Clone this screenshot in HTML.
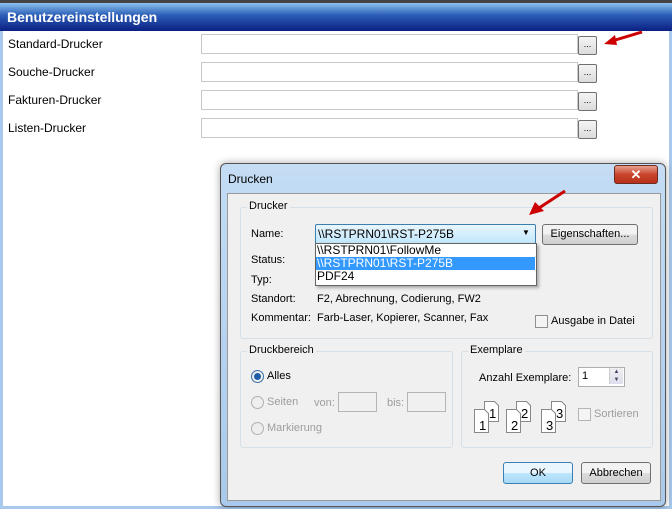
<!DOCTYPE html><html><head><style>
body{margin:0;width:672px;height:509px;position:relative;overflow:hidden;background:#fff;font-family:"Liberation Sans",sans-serif;font-size:12px;color:#000}
.a{position:absolute}
.inp{position:absolute;left:201px;width:375px;height:18px;border:1px solid #c9c9c9;background:#fff}
.btn{position:absolute;left:578px;width:17px;height:17px;border:1px solid #707070;border-radius:2px;background:linear-gradient(#f4f4f4,#dcdcdc);font-size:9px;text-align:center;line-height:14px}
.lbl{position:absolute;left:8px;font-size:12px}
.d{font-size:11px}
.grp{position:absolute;border:1px solid #d5dfe5;border-radius:3px}
.gt{position:absolute;background:#f0f0f0;padding:0 2px;top:-8px;left:6px}
.wb{position:absolute;border:1px solid #707070;border-radius:3px;background:linear-gradient(#f2f2f2 50%,#dddddd 50%,#cfcfcf);text-align:center}
.rad{position:absolute;width:11px;height:11px;border-radius:50%;border:1px solid #b0b0b0;background:#eee}
.gray{color:#9d9d9d}
</style></head><body>
<div class="a" style="left:0;top:0;width:672px;height:509px;border-left:3px solid #a8c8ec;border-right:3px solid #a8c8ec;border-bottom:3px solid #a8c8ec;box-sizing:border-box"></div>
<div class="a" style="left:0;top:0;width:672px;height:31px;background:linear-gradient(#444 0,#444 3px,#8cc2ee 3px,#2c5fb8 15px,#0a1f82 31px)"></div>
<div class="a" style="left:7px;top:9px;color:#fff;font-weight:bold;font-size:14px">Benutzereinstellungen</div>
<div class="lbl" style="top:37px">Standard-Drucker</div><div class="inp" style="top:34px"></div><div class="btn" style="top:36px">...</div>
<div class="lbl" style="top:65px">Souche-Drucker</div><div class="inp" style="top:62px"></div><div class="btn" style="top:64px">...</div>
<div class="lbl" style="top:93px">Fakturen-Drucker</div><div class="inp" style="top:90px"></div><div class="btn" style="top:92px">...</div>
<div class="lbl" style="top:121px">Listen-Drucker</div><div class="inp" style="top:118px"></div><div class="btn" style="top:120px">...</div>
<svg class="a" style="left:600px;top:28px" width="50" height="25"><path d="M42 4 L12 13" stroke="#c00" stroke-width="3"/><path d="M4 16 L15 7 L17 17Z" fill="#c00"/></svg>
<div class="a" style="left:220px;top:163px;width:444px;height:342px;border:1px solid #555;border-radius:6px;background:linear-gradient(#c4dcf4,#a9c9ec);box-shadow:0 0 8px rgba(0,0,0,.35)"></div>
<div class="a d" style="left:228px;top:172px;font-size:12px">Drucken</div>
<div class="a" style="left:614px;top:165px;width:42px;height:17px;border:1px solid #6d2a20;border-radius:3px;background:linear-gradient(#e8a08e,#c8452c 50%,#b53018);color:#fff;font-weight:bold;text-align:center;line-height:17px;font-size:13px">✕</div>
<div class="a" style="left:227px;top:193px;width:432px;height:306px;background:#f0f0f0;border:1px solid #9a9a9a"></div>
<div class="grp" style="left:240px;top:207px;width:411px;height:130px"><div class="gt d">Drucker</div></div>
<div class="a d" style="left:251px;top:228px">Name:</div>
<div class="a d" style="left:251px;top:254px">Status:</div>
<div class="a d" style="left:251px;top:274px">Typ:</div>
<div class="a d" style="left:251px;top:293px">Standort:</div>
<div class="a d" style="left:317px;top:293px">F2, Abrechnung, Codierung, FW2</div>
<div class="a d" style="left:251px;top:312px">Kommentar:</div>
<div class="a d" style="left:317px;top:312px">Farb-Laser, Kopierer, Scanner, Fax</div>
<div class="a" style="left:535px;top:315px;width:11px;height:11px;border:1px solid #8f8f8f;background:#f4f4f4"></div>
<div class="a d" style="left:551px;top:315px">Ausgabe in Datei</div>
<div class="a" style="left:315px;top:224px;width:219px;height:19px;border:1px solid #3c7fb1;border-radius:2px;background:linear-gradient(#eaf6fd,#bee6fd)"></div>
<div class="a" style="left:318px;top:227px;font-size:12px">\\RSTPRN01\RST-P275B</div>
<div class="a" style="left:522px;top:228px;font-size:8px">▼</div>
<div class="a" style="left:315px;top:243px;width:220px;height:41px;border:1px solid #646464;background:#fff;box-shadow:2px 2px 3px rgba(0,0,0,.3)"></div>
<div class="a" style="left:316px;top:257px;width:219px;height:13px;background:#3399ff"></div>
<div class="a" style="left:317px;top:244px;font-size:12px;line-height:13px">\\RSTPRN01\FollowMe<br><span style="color:#fff">\\RSTPRN01\RST-P275B</span><br>PDF24</div>
<div class="wb d" style="left:542px;top:224px;width:94px;height:19px;line-height:19px">Eigenschaften...</div>
<svg class="a" style="left:525px;top:188px" width="45" height="30"><path d="M40 3 L14 20" stroke="#c00" stroke-width="3"/><path d="M4 27 L10 14 L19 23Z" fill="#c00"/></svg>
<div class="grp" style="left:240px;top:351px;width:211px;height:95px"><div class="gt d">Druckbereich</div></div>
<div class="rad" style="left:251px;top:370px;border-color:#3a6ea5"><div style="margin:2px;width:7px;height:7px;border-radius:50%;background:#1f5fa8"></div></div>
<div class="a d" style="left:267px;top:370px">Alles</div>
<div class="rad" style="left:251px;top:396px"></div><div class="a d gray" style="left:267px;top:396px">Seiten</div>
<div class="a d gray" style="left:314px;top:397px">von:</div><div class="a" style="left:338px;top:392px;width:37px;height:18px;border:1px solid #b5b5b5"></div>
<div class="a d gray" style="left:387px;top:397px">bis:</div><div class="a" style="left:407px;top:392px;width:37px;height:18px;border:1px solid #b5b5b5"></div>
<div class="rad" style="left:251px;top:422px"></div><div class="a d gray" style="left:267px;top:422px">Markierung</div>
<div class="grp" style="left:461px;top:351px;width:190px;height:95px"><div class="gt d">Exemplare</div></div>
<div class="a d" style="left:479px;top:372px">Anzahl Exemplare:</div>
<div class="a" style="left:578px;top:367px;width:45px;height:18px;border:1px solid #abadb3;background:#fff"></div>
<div class="a d" style="left:582px;top:370px">1</div>
<div class="a" style="left:609px;top:368px;width:13px;height:16px;background:linear-gradient(#f0f0f0,#dde);border-left:1px solid #ccc;font-size:6px;line-height:8px;text-align:center;color:#446">▲<br>▼</div>
<svg class="a" style="left:472px;top:400px" width="100" height="35" font-family="Liberation Sans" font-size="13">
<g fill="#fff" stroke="#888"><path d="M12.5 1.5h10l4 4v16h-14z"/><path d="M2.5 9.5h10l4 4v19h-14z"/>
<path d="M44.5 1.5h10l4 4v16h-14z"/><path d="M34.5 9.5h10l4 4v19h-14z"/>
<path d="M79.5 1.5h10l4 4v16h-14z"/><path d="M69.5 9.5h10l4 4v19h-14z"/></g>
<text x="17" y="18">1</text><text x="7" y="30">1</text><text x="49" y="18">2</text><text x="39" y="30">2</text><text x="84" y="18">3</text><text x="74" y="30">3</text></svg>
<div class="a" style="left:578px;top:408px;width:11px;height:11px;border:1px solid #b5b5b5;background:#f4f4f4"></div>
<div class="a d gray" style="left:594px;top:408px">Sortieren</div>
<div class="wb d" style="left:503px;top:462px;width:68px;height:20px;line-height:20px;border-color:#3c7fb1;background:linear-gradient(#eaf6fd 50%,#bee6fd 50%,#a7d9f5)">OK</div>
<div class="wb d" style="left:581px;top:462px;width:68px;height:20px;line-height:20px">Abbrechen</div>
</body></html>
